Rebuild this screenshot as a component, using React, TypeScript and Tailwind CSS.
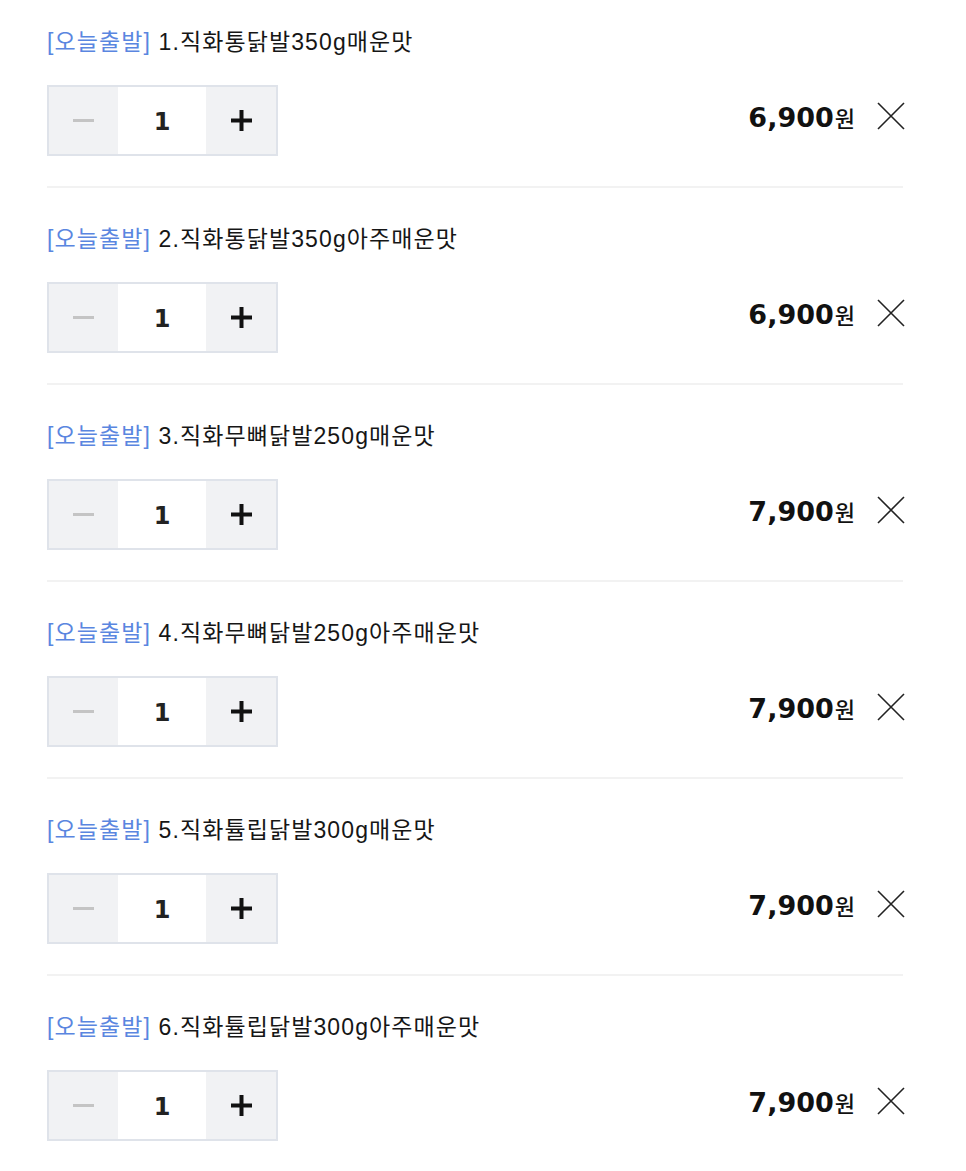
import React from "react";

const items = [
  { name: "1.직화통닭발350g매운맛", price: "6,900" },
  { name: "2.직화통닭발350g아주매운맛", price: "6,900" },
  { name: "3.직화무뼈닭발250g매운맛", price: "7,900" },
  { name: "4.직화무뼈닭발250g아주매운맛", price: "7,900" },
  { name: "5.직화튤립닭발300g매운맛", price: "7,900" },
  { name: "6.직화튤립닭발300g아주매운맛", price: "7,900" },
];

const title = { fontFamily: '"Liberation Sans", "Noto Sans CJK KR", sans-serif' };
const kr = { fontFamily: '"Noto Sans CJK KR", "Noto Sans", sans-serif' };
const dv = { fontFamily: '"DejaVu Sans", "Noto Sans CJK KR", sans-serif' };

export default function App() {
  return (
    <div className="bg-white w-[966px] min-h-[1171px]">
      <div className="ml-[47px] w-[856px]">
        {items.map((it, i) => (
          <div
            key={i}
            className={`border-b-2 border-[#f2f2f2] pb-[30px] ${i === 0 ? "pt-[27px]" : "pt-[36px]"}`}
          >
            <p className="text-[23px] leading-[30px] tracking-[1.1px] text-[#161616]" style={title}>
              <span className="text-[#5a86e0]">[오늘출발]</span> {it.name}
            </p>
            <div className="mt-[28px] flex items-center justify-between">
              <div className="flex h-[71px] w-[231px] border-2 border-[#dfe3ea]">
                <div className="flex w-[69px] items-center justify-center bg-[#f1f2f4]">
                  <div className="h-[3px] w-[21px] bg-[#c4c4c4]" />
                </div>
                <div className="flex flex-1 items-center justify-center bg-white">
                  <span className="mt-[3px] text-[24px] font-bold text-[#222] leading-none" style={dv}>
                    1
                  </span>
                </div>
                <div className="flex w-[70px] items-center justify-center bg-[#f1f2f4]">
                  <svg width="21" height="21" viewBox="0 0 21 21">
                    <rect x="0" y="8.5" width="21" height="4" fill="#111" />
                    <rect x="8.5" y="0" width="4" height="21" fill="#111" />
                  </svg>
                </div>
              </div>
              <div className="flex items-center -mr-[2px] -mt-[6px]">
                <div className="flex items-baseline text-[#111]">
                  <span className="text-[27px] font-bold leading-none" style={dv}>
                    {it.price}
                  </span>
                  <span className="ml-[1px] text-[22px] font-medium leading-none" style={kr}>
                    원
                  </span>
                </div>
                <svg className="ml-[22px] -mt-[4px]" width="28" height="28" viewBox="0 0 28 28">
                  <path d="M1 1L27 27M27 1L1 27" stroke="#222" strokeWidth="1.6" />
                </svg>
              </div>
            </div>
          </div>
        ))}
      </div>
    </div>
  );
}
